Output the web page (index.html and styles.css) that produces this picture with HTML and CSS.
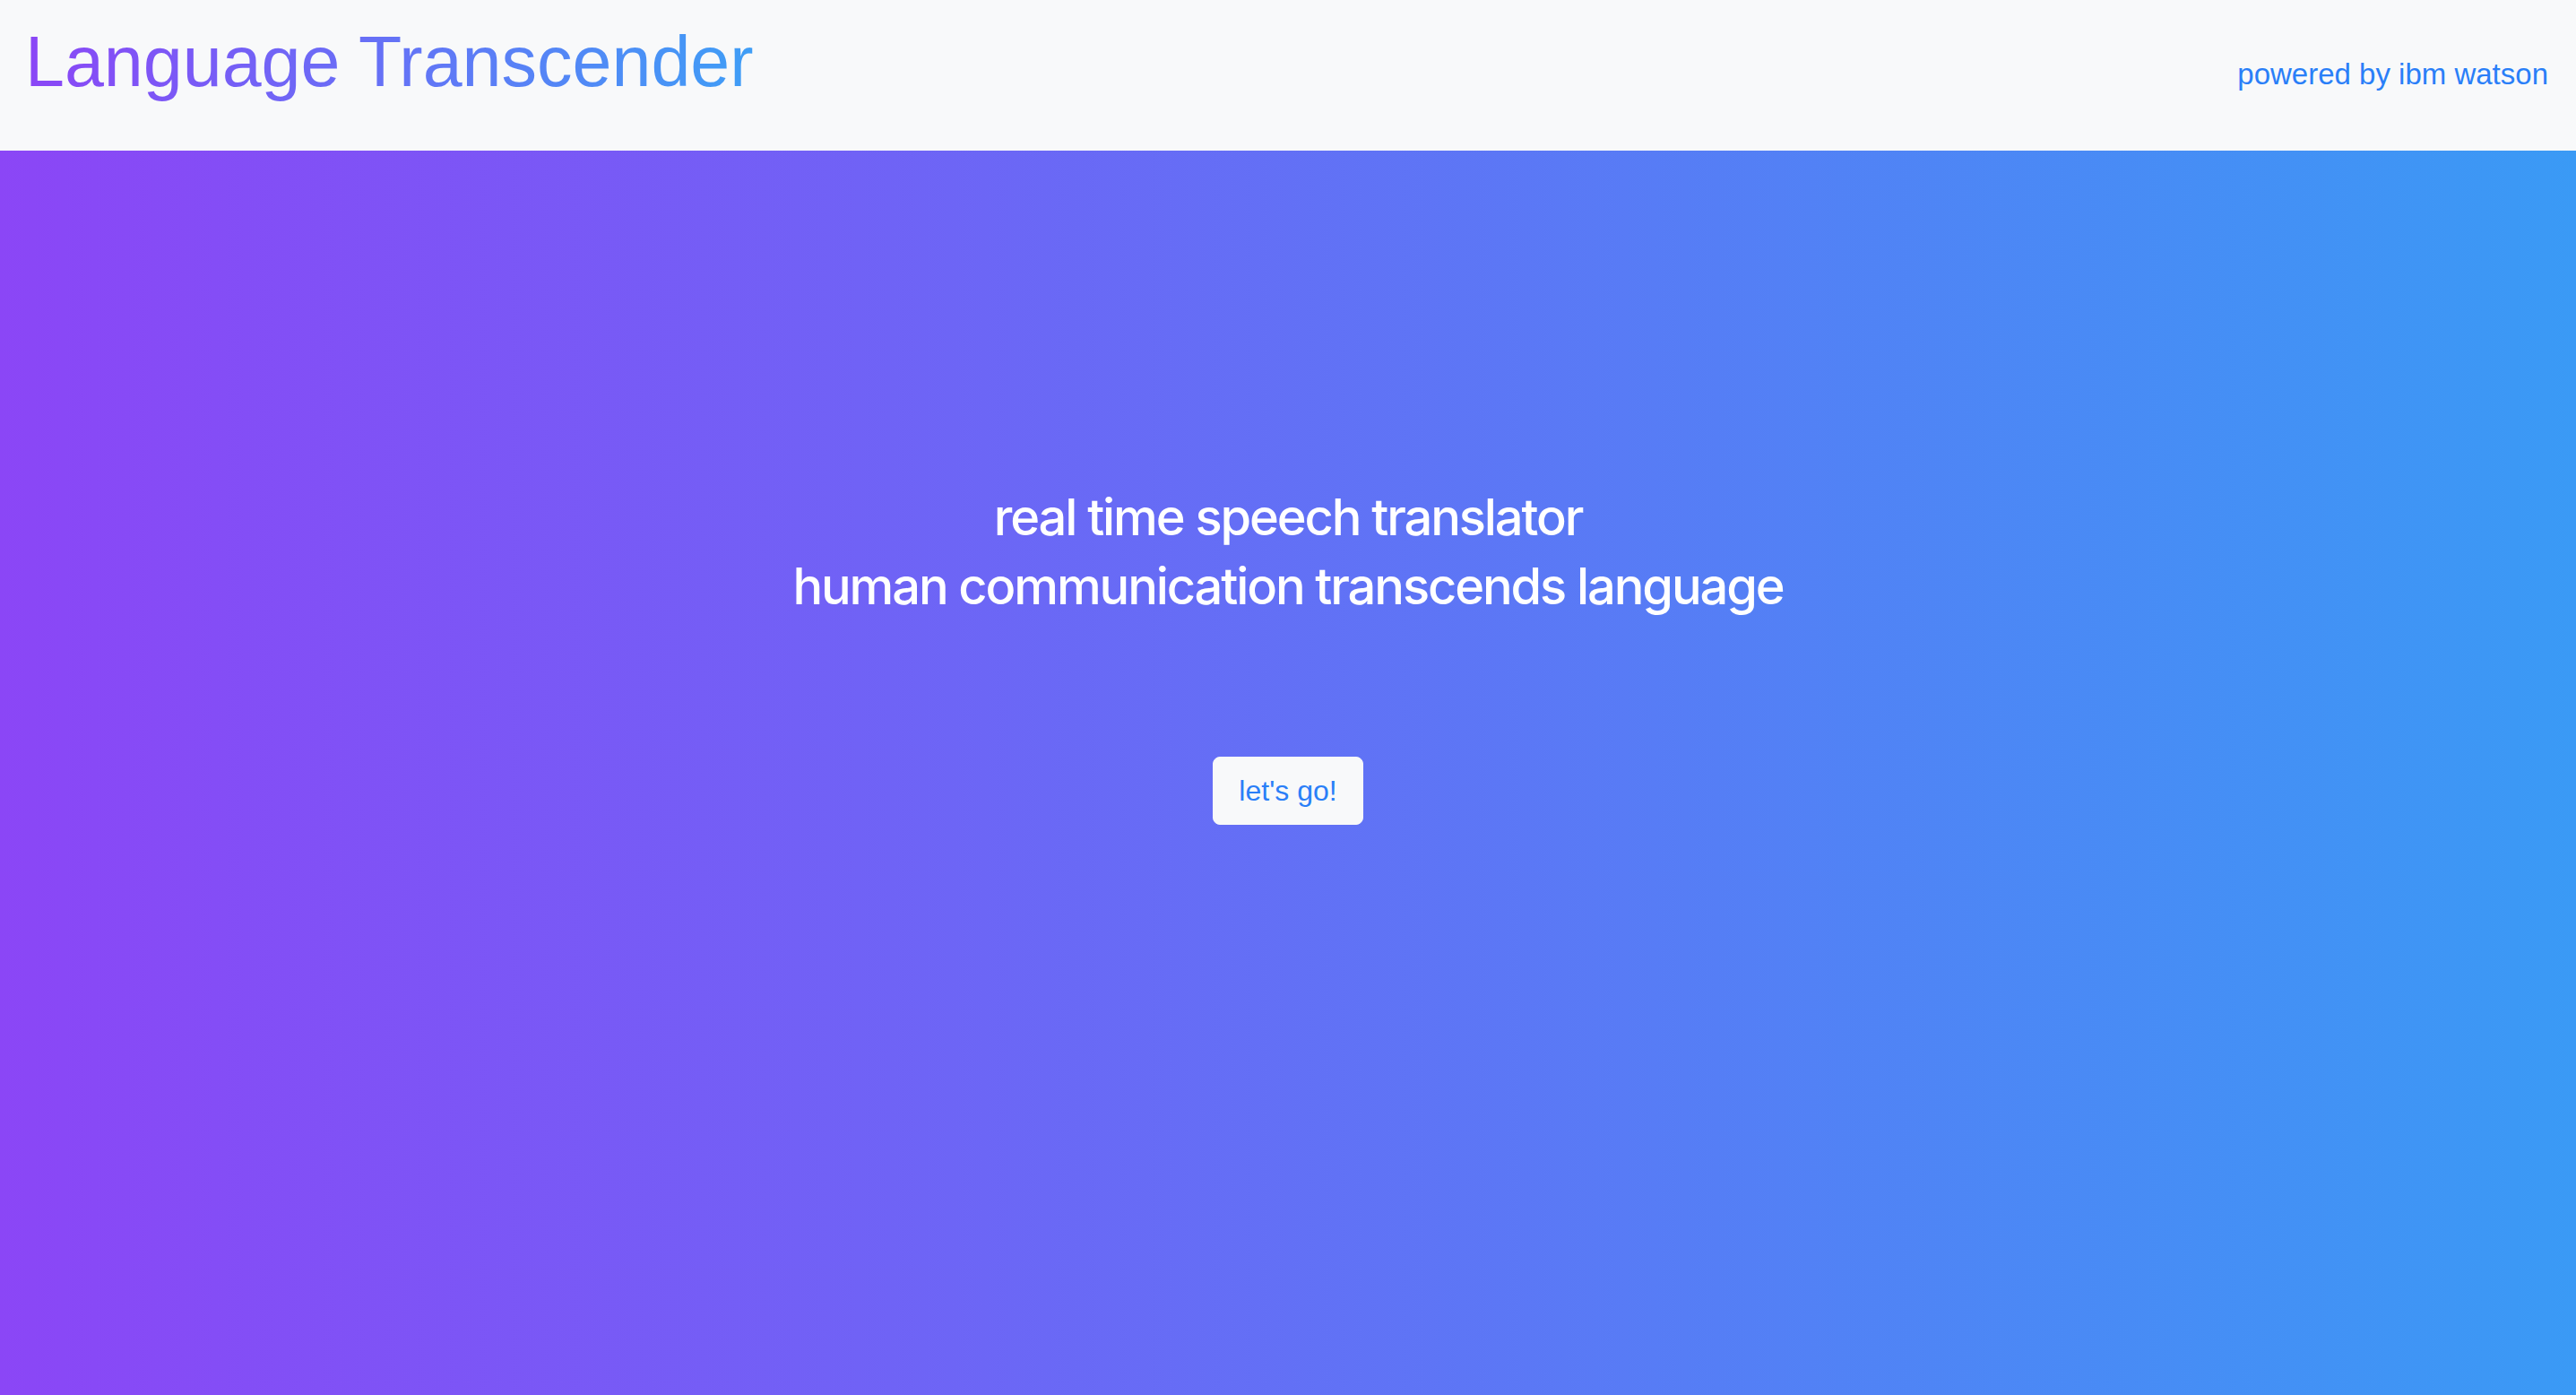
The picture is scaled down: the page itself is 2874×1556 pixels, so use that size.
FILE: index.html
```html
<!DOCTYPE html>
<html lang="en">
<head>
<meta charset="utf-8">
<title>Language Transcender</title>
<link rel="stylesheet" href="styles.css">
</head>
<body>
<header class="navbar">
  <a class="brand" href="#">Language Transcender</a>
  <a class="nav-link" href="#">powered by ibm watson</a>
</header>
<main class="hero">
  <h3 class="tagline">real time speech translator<br>human communication transcends language</h3>
  <button class="btn-go" type="button">let's go!</button>
</main>
</body>
</html>
```

FILE: styles.css
```css
html, body {
  margin: 0;
  padding: 0;
  height: 100%;
}
body {
  font-family: "Liberation Sans", Arial, sans-serif;
  display: flex;
  flex-direction: column;
  min-height: 100vh;
}
.navbar {
  height: 168px;
  box-sizing: border-box;
  background: #f8f9fa;
  display: flex;
  justify-content: space-between;
  align-items: flex-start;
  padding: 21px 31px 0 28px;
  flex: none;
}
.brand {
  font-size: 79px;
  line-height: 96px;
  text-decoration: none;
  background: linear-gradient(to right, #8b46f6, #3f9ef6);
  -webkit-background-clip: text;
  background-clip: text;
  color: transparent;
}
.nav-link {
  margin-top: 38px;
  font-size: 33px;
  line-height: 48px;
  color: #2a7ff8;
  text-decoration: none;
}
.hero {
  flex: 1;
  background: linear-gradient(to right, #8b46f6, #3a9af5);
  display: flex;
  flex-direction: column;
  align-items: center;
  padding-top: 371px;
}
.tagline {
  margin: 0;
  font-family: "Inter", "Liberation Sans", sans-serif;
  font-weight: 500;
  font-size: 56px;
  line-height: 77px;
  letter-spacing: -2.1px;
  color: #ffffff;
  text-align: center;
}
.btn-go {
  margin-top: 151px;
  font-family: "Liberation Sans", Arial, sans-serif;
  font-size: 32px;
  line-height: 50px;
  padding: 12px 28px;
  border: 1px solid #f8f9fa;
  border-radius: 8px;
  background: #f8f9fa;
  color: #2a7ff8;
  cursor: pointer;
}
```
